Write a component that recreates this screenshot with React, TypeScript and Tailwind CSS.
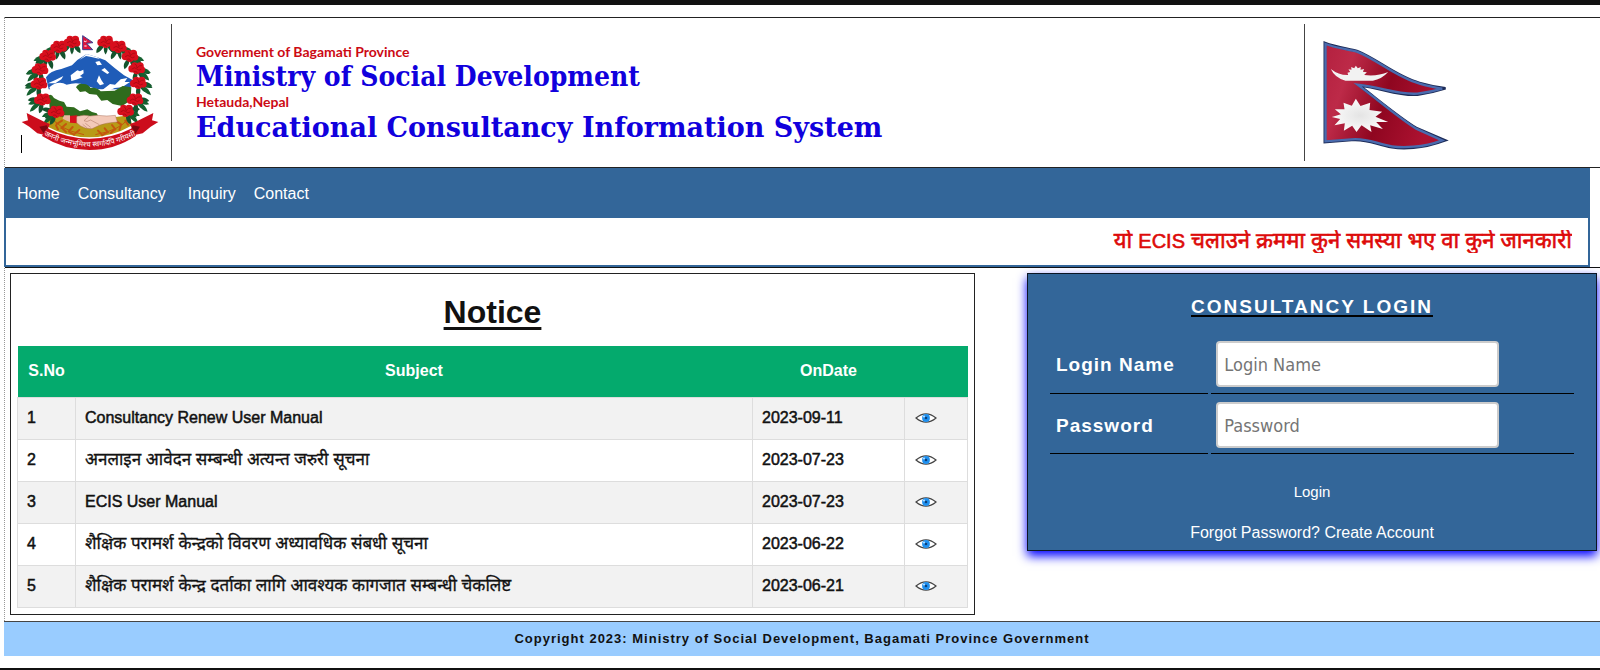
const navLinks = ["Home", "Consultancy", "Inquiry", "Contact"];

const notices = [
  { id: 1, subject: "Consultancy Renew User Manual", date: "2023-09-11" },
  { id: 2, subject: "अनलाइन आवेदन सम्बन्धी अत्यन्त जरुरी सूचना", date: "2023-07-23", nepali: true },
  { id: 3, subject: "ECIS User Manual", date: "2023-07-23" },
  { id: 4, subject: "शैक्षिक परामर्श केन्द्रको विवरण अध्यावधिक संबधी सूचना", date: "2023-06-22", nepali: true },
  { id: 5, subject: "शैक्षिक परामर्श केन्द्र दर्ताका लागि आवश्यक कागजात सम्बन्धी चेकलिष्ट", date: "2023-06-21", nepali: true },
];

const flowers = [
  [216, 125, 0], [176, 140, -20], [143, 167, -35], [120, 207, -60], [117, 250, -80], [127, 298, -95], [168, 335, -120],
  [317, 125, 0], [355, 140, 20], [390, 167, 35], [410, 204, 60], [415, 248, 80], [405, 298, 95], [377, 332, 120],
];

function Flower({ x, y, turn }: { x: number; y: number; turn: number }) {
  return (
    <g transform={`translate(${x} ${y}) scale(1.25)`}>
      <g fill="#14532d" transform={`rotate(${-turn / 2})`}>
        <path d="M-4 5C-18 8-24 18-22 27C-12 24-5 15-2 6Z" />
        <path d="M4 5C18 8 22 18 20 28C10 24 4 15 2 6Z" />
        <path d="M0 4C-7 14-5 25 0 31C6 23 6 13 2 4Z" />
      </g>
      <g fill="#15602f">
        <path d={x < 267 ? "M-8 2C-20-2-28 4-34 12C-26 14-16 12-6 8Z" : "M8 2C20-2 28 4 34 12C26 14 16 12 6 8Z"} />
        <path d={x < 267 ? "M-8 8C-22 10-28 20-30 30C-20 28-10 18-4 10Z" : "M8 8C22 10 28 20 30 30C20 28 10 18 4 10Z"} />
      </g>
      <g fill="#d80f1d">
        <circle cx="-11" cy="2" r="9" />
        <circle cx="-5" cy="-6" r="8" />
        <circle cx="8" cy="-5" r="9" />
        <circle cx="12" cy="4" r="8" />
        <circle cx="0" cy="6" r="9" />
      </g>
      <path d="M-12 3Q-5-4 0 2Q5 8 11 3M-5-10Q1-8 1 0Q7-8 13-6M-7 9Q0 6 2 13" fill="none" stroke="#9c0711" strokeWidth="1.6" />
    </g>
  );
}

function Emblem() {
  return (
    <svg viewBox="60 99 420 354" className="h-[118px] w-[140px] shrink-0" role="img" aria-label="Emblem of Nepal">
      <path d="M138 232Q150 212 184 207L216 196L232 180L260 162L292 172L316 181L343 203L372 226L398 240L390 268L146 268Z" fill="#1f5cb8" />
      <path d="M260 162L292 172L300 177L274 171L258 168L238 180Z" fill="#fff" />
      <path d="M212 226L232 211L240 214L250 209L251 220L240 228L248 232L228 239L214 243ZM286 186L298 183L306 194L292 196ZM304 210L314 204L328 218L322 222ZM290 244L297 226L304 240L312 252L300 256Z" fill="#fff" />
      <path d="M144 250L166 240L190 228L184 238L166 250ZM304 272L330 252L345 254L362 238L382 234L374 246L390 246L366 262L344 264L318 276Z" fill="#fff" />
      <path d="M148 262Q174 240 200 254Q232 244 256 256Q298 272 338 276L384 262L394 346L250 356L176 346Z" fill="#fff" />
      <path d="M228 262Q236 248 248 252Q262 250 272 264Q290 260 302 274L344 272L368 258L394 262L392 296Q380 312 366 318L338 312L322 300L304 302L290 284L268 282L256 274L240 276Z" fill="#2f6b1d" />
      <path d="M146 286Q154 280 162 294L178 302L192 306L200 320L222 322L240 334L262 328L276 336L290 340L296 350L226 348L190 356L150 338Z" fill="#2f6b1d" />
      <path d="M150 344L196 352L342 352L388 346L397 376Q334 412 268 412Q202 412 138 378Z" fill="#b89a16" />
      <g stroke="#c4570d" fill="none">
        <path d="M152 344Q166 386 252 404M384 356Q362 390 286 404" strokeWidth="3" />
        <path d="M158 352l-4 18M170 372l16-10M168 376l6 12M184 384l14-12M188 386l10 10M206 394l12-13M208 396l14 8M226 400l12-10M376 362l8 12M364 374l-14-10M362 378l-4 12M346 388l-10-13M342 390l-10 9M324 397l-10-12M320 398l-14 8M304 402l-10-10" strokeLinecap="round" strokeWidth="6" />
      </g>
      <path d="M206 348L232 346L232 370L210 368Z" fill="#d80f1d" />
      <path d="M192 346L210 346L210 366Q198 362 188 356Z" fill="#e8b59e" />
      <path d="M230 350Q250 342 270 348L292 346Q322 350 346 346L352 366Q318 368 298 376L276 386Q258 388 242 378L230 368Z" fill="#f3c9b8" stroke="#a66c56" strokeWidth="1.4" />
      <path d="M266 350L252 362Q260 368 272 360L298 374M256 370L272 382M248 373L262 384" fill="none" stroke="#a66c56" strokeWidth="1.4" />
      {flowers.map(([x, y, turn]) => (
        <Flower key={`${x}-${y}`} x={x} y={y} turn={turn} />
      ))}
      {/* small flag above the mountain */}
      <path d="M248 107L279 128L260 130L278 149H248Z" fill="#dc143c" stroke="#3c3f91" strokeWidth="3" />
      <path d="M252 123q4 4 8 0M253 138h7" stroke="#fff" strokeWidth="3" fill="none" />
      {/* ribbon */}
      <path d="M65 366L84 361L80 339L134 366L150 372L134 405L112 400L88 380Z" fill="#cc0d1c" />
      <path d="M475 366L456 361L460 339L406 366L390 372L404 405L428 400L452 380Z" fill="#cc0d1c" />
      <path d="M118 380L134 405L146 388L140 376Z" fill="#7d0710" />
      <path d="M420 380L404 405L394 388L398 376Z" fill="#7d0710" />
      <path d="M142 385Q202 416 268 416Q336 416 396 385L404 394L408 407Q344 450 268 450Q192 450 126 408L134 394Z" fill="#cc0d1c" />
      <path id="motto" d="M136 408Q200 440 268 440Q338 440 402 408" fill="none" />
      <text fill="#fff" fontSize="22" fontFamily="Noto Sans, sans-serif">
        <textPath href="#motto" startOffset="50%" textAnchor="middle">
          जननी जन्मभूमिश्च स्वर्गादपि गरीयसी
        </textPath>
      </text>
    </svg>
  );
}

function Flag() {
  return (
    <svg viewBox="128 120 380 330" className="h-[110px] w-[127px] shrink-0" role="img" aria-label="Flag of Nepal">
      <defs>
        <linearGradient id="cloth" x1="0" x2="1" y1="0" y2="0.3">
          <stop offset="0" stopColor="#b3203f" />
          <stop offset="0.25" stopColor="#bd2a48" />
          <stop offset="0.6" stopColor="#8f0620" />
          <stop offset="1" stopColor="#ad1231" />
        </linearGradient>
        <radialGradient id="pale">
          <stop offset="0" stopColor="#e4e4e4" />
          <stop offset="1" stopColor="#fafafa" />
        </radialGradient>
      </defs>
      <path
        d="M136 129C170 142 205 146 232 153C292 176 350 230 420 249Q458 260 498 265Q454 279 414 284C350 288 306 262 240 257C300 303 358 352 410 384L497 421Q446 440 402 443C304 452 286 414 216 420L136 426Z"
        fill="url(#cloth)"
        stroke="#1d2c58"
        strokeWidth="8"
      />
      <path
        d="M138 132C170 144 205 148 232 155C292 178 350 232 420 251Q458 262 488 266Q454 276 414 281C350 285 306 261 234 254C300 303 358 354 410 386L488 421Q446 437 402 440C304 449 286 412 216 418L138 424Z"
        fill="none"
        stroke="#4a6bae"
        strokeWidth="7"
      />
      <path d="M154 207Q178 226 206 225L204 218L212 216L207 208L216 209L215 201L224 205L229 197L235 205L244 201L243 209L254 207L250 215L262 217L254 225Q292 230 326 216Q306 238 280 242H198Q166 234 154 207Z" fill="#f2f2f2" />
      <path d="M229 296L243 318L272 308L270 330L308 335L288 350L326 366L290 366L310 387L272 376L276 396L246 376L231 396L218 377L193 392L196 370L165 376L182 357L157 351L184 343L166 328L195 328L192 308L217 317Z" fill="url(#pale)" />
    </svg>
  );
}

function EyeIcon() {
  return (
    <svg viewBox="0 0 22 12" className="h-3 w-[22px]" aria-hidden="true">
      <path d="M1 6Q6 1.800 11 1.800T21 6Q16 10.200 11 10.200T1 6Z" fill="#fff" stroke="#444" strokeWidth="1.2" />
      <circle cx="11" cy="6" r="3.900" fill="#1e90f0" />
      <circle cx="11" cy="6" r="1.300" fill="#0b3f7a" />
      <circle cx="9" cy="4.500" r="1" fill="#bfe2ff" />
    </svg>
  );
}

function LoginPanel() {
  return (
    <form className="border border-[#0b1624] bg-[#336699] px-[22px] pt-[17px] pb-[5px] shadow-[0_5px_10px_blue]">
      <h2 className="text-center text-[19px] leading-8 font-bold tracking-[2px] text-white underline decoration-black decoration-2 underline-offset-2">
        CONSULTANCY LOGIN
      </h2>
      <div className="mt-4 grid grid-cols-[158fr_362fr] gap-x-[3px]">
        <label htmlFor="login" className="flex h-[55px] items-center border-b border-black pt-1 pb-1.5 pl-1.5 text-[19px] font-bold tracking-[1px] text-white">
          Login Name
        </label>
        <div className="border-b border-black pt-0.5 pl-[5px]">
          <input
            id="login"
            type="text"
            placeholder="Login Name"
            className="h-[46px] w-[283px] max-w-full rounded border-2 border-[#ccc] bg-white px-1.5 font-['DejaVu_Sans_Condensed','Noto_Sans',sans-serif] text-lg placeholder:text-[#757575]"
          />
        </div>
        <label htmlFor="password" className="flex h-[60px] items-center border-b border-black pt-1.5 pl-1.5 text-[19px] font-bold tracking-[1px] text-white">
          Password
        </label>
        <div className="border-b border-black pt-2 pl-[5px]">
          <input
            id="password"
            type="password"
            placeholder="Password"
            className="h-[46px] w-[283px] max-w-full rounded border-2 border-[#ccc] bg-white px-1.5 font-['DejaVu_Sans_Condensed','Noto_Sans',sans-serif] text-lg placeholder:text-[#757575]"
          />
        </div>
      </div>
      <div className="mt-[22px] text-center text-white">
        <button type="submit" className="px-4 py-1 text-[15px] leading-6">
          Login
        </button>
      </div>
      <p className="mt-[13px] text-center leading-6 text-white">
        <a href="#forgot">Forgot Password?</a> <a href="#create">Create Account</a>
      </p>
    </form>
  );
}

export default function App() {
  return (
    <div className="bg-white font-['Liberation_Sans','Noto_Sans',sans-serif] text-base text-[#111]">
      <div className="h-[5px] bg-[#111]" />
      <div className="mt-3 ml-1">
        <div className="border-l border-dotted border-[#999]">
          <header className="flex border-y border-[#222] py-1.5">
            <div className="flex h-[137px] w-[167px] shrink-0 border-r border-[#444] pl-4">
              <div className="mt-[111px] -mr-0.5 h-[18px] w-px shrink-0 bg-black" />
              <div className="mt-[9px]">
                <Emblem />
              </div>
            </div>
            <div className="grow pt-4 pl-6">
              <p className="font-['Lato',sans-serif] text-sm leading-6 font-bold text-[#cc0a14]">Government of Bagamati Province</p>
              <h1 className="font-['DejaVu_Serif_Condensed','DejaVu_Serif',serif] text-[28px] leading-[26px] font-bold text-[#1100dd]">
                Ministry of Social Development
              </h1>
              <p className="font-['Lato',sans-serif] text-sm leading-6 font-bold text-[#cc0a14]">Hetauda,Nepal</p>
              <h1 className="font-['DejaVu_Serif',serif] text-[27px] leading-7 font-bold text-[#1100dd]">
                Educational Consultancy Information System
              </h1>
            </div>
            <div className="w-[296px] shrink-0 border-l border-[#444] pt-4 pl-[17px]">
              <Flag />
            </div>
          </header>

          <div className="mr-2.5 -ml-px bg-[#336699]">
            <nav className="flex h-12 items-center gap-[18px] pt-1 pl-[13px] text-white">
              {navLinks.map((link) => (
                <a key={link} href={`#${link.toLowerCase()}`} className={link === "Inquiry" ? "pl-1" : ""}>
                  {link}
                </a>
              ))}
            </nav>
            <div className="border-2 border-[#336699] bg-white pt-3 pr-4 pb-3">
              <p className="h-[23px] overflow-hidden text-right text-[22px] leading-[22px] whitespace-nowrap text-[#dd0a0a] [-webkit-text-stroke:0.6px_#dd0a0a]">
                यो <span className="text-xl leading-[22px]">ECIS</span> चलाउने क्रममा कुने समस्या भए वा कुने जानकारी
              </p>
            </div>
          </div>

          <main className="grid grid-cols-[965fr_570fr] items-start gap-x-[52px] border-t border-[#111] pt-[5px] pr-[3px] pb-1.5 pl-[5px]">
            <section className="border border-[#222] p-1.5 pt-5">
              <h2 className="text-center text-[32px] leading-[37px] font-bold underline decoration-[3px] underline-offset-4">Notice</h2>
              <table className="mt-[15px] w-full table-fixed border-collapse">
                <colgroup>
                  <col className="w-[58px]" />
                  <col />
                  <col className="w-[152px]" />
                  <col className="w-[63px]" />
                </colgroup>
                <thead>
                  <tr className="h-[51px] bg-[#04aa6d] text-white">
                    <th>S.No</th>
                    <th>Subject</th>
                    <th>OnDate</th>
                    <th aria-label="View" />
                  </tr>
                </thead>
                <tbody className="[-webkit-text-stroke:0.5px_#111]">
                  {notices.map((notice) => (
                    <tr key={notice.id} className="h-[42px] odd:bg-[#f2f2f2]">
                      <td className="border border-[#ddd] px-[9px]">{notice.id}</td>
                      <td className={notice.nepali ? "border border-[#ddd] px-[9px] text-[17px] leading-6 [-webkit-text-stroke:0.3px_#111]" : "border border-[#ddd] px-[9px]"}>
                        {notice.subject}
                      </td>
                      <td className="border border-[#ddd] px-[9px]">{notice.date}</td>
                      <td className="border border-[#ddd] px-2.5">
                        <a href={`#notice-${notice.id}`} aria-label={`View notice ${notice.id}`} className="block">
                          <EyeIcon />
                        </a>
                      </td>
                    </tr>
                  ))}
                </tbody>
              </table>
            </section>
            <LoginPanel />
          </main>
        </div>
        <footer className="border-t border-[#444] bg-[#99ccff] text-center text-[13px] leading-[34px] font-bold tracking-[1px]">
          Copyright 2023: Ministry of Social Development, Bagamati Province Government
        </footer>
      </div>
      <div className="mt-3 h-0.5 bg-[#111]" />
    </div>
  );
}
